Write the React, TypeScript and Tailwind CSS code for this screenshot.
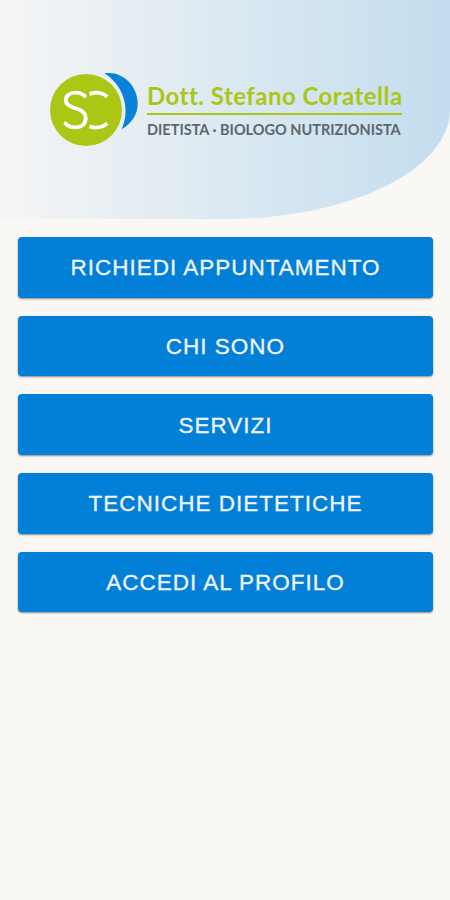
const links = [
  'Richiedi appuntamento',
  'Chi sono',
  'Servizi',
  'Tecniche dietetiche',
  'Accedi al profilo',
]

function Logo() {
  return (
    <svg
      className="w-[90px] h-[76px] shrink-0"
      viewBox="49 71 90 76"
      fill="none"
      aria-hidden="true"
    >
      <circle cx="86" cy="110" r="36" fill="#abc615" />
      <path
        d="M104.500 73.200C122 70.500 137.700 85 137.700 103.500C137.700 114 132 123.500 121.500 129.300C130.500 110 124.500 86 104.500 73.200Z"
        fill="#0781d9"
      />
      <g stroke="#fff" strokeWidth="3.900">
        <path
          d="M84.800 96C82.200 93.500 79 92.600 75.500 92.600C69.500 92.600 65.800 95.800 65.800 100.200C65.800 104.800 69.500 106.700 75.500 108.300C82 110 85.700 112.500 85.700 118C85.700 123.800 81.500 127.400 75.500 127.400C71.300 127.400 68 126.300 65.500 123.500"
          strokeLinecap="round"
        />
        <path d="M89.500 94.100C95.500 91.700 102.500 92.500 107.300 96.800" />
        <path d="M89.500 126.300C95.500 128.500 102.500 127.500 107.300 123.200" />
      </g>
    </svg>
  )
}

function Header() {
  return (
    <header className="flex h-[219px] pt-[71px] pl-[49px] rounded-br-[50%] bg-linear-to-r from-[#f5f5f5] to-[#c3ddee]">
      <Logo />
      <div className="ml-2 w-[255px] pt-[10px] font-['Lato',sans-serif] whitespace-nowrap">
        <h1 className="text-[24px] leading-[30px] font-bold tracking-[0.46px] text-[#abc615]">
          Dott. Stefano Coratella
        </h1>
        <div className="mt-[2px] h-[2px] bg-[#abc615]" />
        <p className="mt-[5px] text-[14.500px] leading-[20px] font-bold tracking-[0.010px] text-[#5c666e]">
          DIETISTA · BIOLOGO NUTRIZIONISTA
        </p>
      </div>
    </header>
  )
}

export default function App() {
  return (
    <div className="min-h-screen bg-[#f9f8f4]">
      <Header />
      <nav className="flex flex-col gap-[18px] pt-[18px] pl-[18px] pr-[17px]">
        {links.map((label) => (
          <button
            key={label}
            className="h-[60.7px] pt-[1.5px] rounded-[4px] bg-[#0280d7] font-['Liberation_Sans',sans-serif] text-[22.5px] tracking-[1px] text-[#f1f5ff] uppercase shadow-[0_1px_2px_rgba(0,0,0,0.45)] [-webkit-text-stroke:0.3px_#f1f5ff]"
          >
            {label}
          </button>
        ))}
      </nav>
    </div>
  )
}
